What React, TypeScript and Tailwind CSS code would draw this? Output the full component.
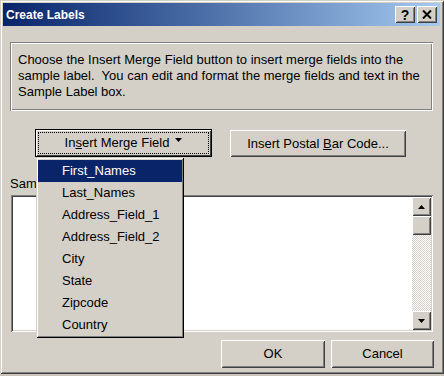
const raised =
  "shadow-[inset_1px_1px_#ffffff,inset_-1px_-1px_#404040,inset_2px_2px_#d4d0c8,inset_-2px_-2px_#808080]";

const menuItems = [
  "First_Names",
  "Last_Names",
  "Address_Field_1",
  "Address_Field_2",
  "City",
  "State",
  "Zipcode",
  "Country",
];

const Arrow: React.FC<{ down?: boolean }> = ({ down }) => (
  <svg width="7" height="4" viewBox="0 0 7 4">
    {down ? <path d="M0 0h7L3.5 4z" fill="#000" /> : <path d="M0 4h7L3.5 0z" fill="#000" />}
  </svg>
);

export default function App() {
  return (
    <div className="w-[444px] h-[376px] bg-[#c8c4bc] font-['Liberation_Sans',Arial,sans-serif] text-[13px] leading-[16px] text-black">
      <div className="h-[374px] flex flex-col bg-[#d4d0c8] pt-[3px] pl-[3px] pr-[4px] pb-[3px] shadow-[inset_1px_1px_#d4d0c8,inset_-1px_-1px_#404040,inset_2px_2px_#ffffff,inset_-2px_-2px_#808080]">
        {/* title bar */}
        <div className="h-[23px] flex items-center justify-between pl-[3px] pr-[3px] bg-gradient-to-r from-[#0a246a] to-[#a6caf0]">
          <span className="text-white font-bold text-[12px]">Create Labels</span>
          <div className="flex gap-[2px]">
            <div className={`w-[20px] h-[17px] bg-[#d4d0c8] flex items-center justify-center ${raised}`}>
              <span className="font-bold text-[14px] leading-none">?</span>
            </div>
            <div className={`w-[20px] h-[17px] bg-[#d4d0c8] flex items-center justify-center ${raised}`}>
              <svg width="10" height="9" viewBox="0 0 10 9">
                <path d="M1 0.5l8 8M9 0.5l-8 8" stroke="#000" strokeWidth="2" />
              </svg>
            </div>
          </div>
        </div>

        {/* body */}
        <div className="flex flex-col">
          <div className="ml-[7px] mt-[16px] w-[423px] h-[69px] pt-[10px] pl-[8px] shadow-[inset_1px_1px_#808080,inset_-1px_-1px_#ffffff,inset_2px_2px_#ffffff,inset_-2px_-2px_#808080]">
            <div className="whitespace-pre">Choose the Insert Merge Field button to insert merge fields into the</div>
            <div className="whitespace-pre">sample label.  You can edit and format the merge fields and text in the</div>
            <div className="whitespace-pre">Sample Label box.</div>
          </div>

          <div className="flex gap-[18px] mt-[18px] pl-[32px]">
            <div className="relative">
              <div className={`w-[177px] h-[28px] bg-[#d4d0c8] border border-black p-[2px] shadow-[inset_1px_1px_#ffffff,inset_-1px_-1px_#404040]`}>
                <div className="h-full border border-dotted border-black flex items-center justify-center gap-[6px]">
                  <span>
                    In<span className="underline">s</span>ert Merge Field
                  </span>
                  <span className="-mt-[7px]">
                    <Arrow down />
                  </span>
                </div>
              </div>
              <div className="absolute z-10 left-[1px] top-[28px] w-[148px] h-[181px] bg-[#d4d0c8] pt-[3px] px-[2px] shadow-[inset_1px_1px_#d4d0c8,inset_-1px_-1px_#000000,inset_2px_2px_#ffffff,inset_-2px_-2px_#808080]">
                {menuItems.map((m, i) => (
                  <div
                    key={m}
                    className={`h-[22px] flex items-center pl-[24px] ${i === 0 ? "bg-[#0a246a] text-white" : ""}`}
                  >
                    {m}
                  </div>
                ))}
              </div>
            </div>
            <div className={`w-[176px] h-[27px] mt-[1px] bg-[#d4d0c8] flex items-center justify-center ${raised}`}>
              <span>
                Insert Postal <span className="underline">B</span>ar Code...
              </span>
            </div>
          </div>

          <div className="ml-[7px] mt-[19px]">Sample Label:</div>

          <div className="ml-[8px] mt-[3px] w-[422px] h-[137px] bg-white p-[2px] flex shadow-[inset_1px_1px_#808080,inset_-1px_-1px_#ffffff,inset_2px_2px_#404040,inset_-2px_-2px_#d4d0c8]">
            <div className="flex-1" />
            <div className="w-[19px] flex flex-col">
              <div className={`h-[19px] bg-[#d4d0c8] flex items-center justify-center ${raised}`}>
                <Arrow />
              </div>
              <div className={`h-[19px] bg-[#d4d0c8] ${raised}`} />
              <div className="flex-1 bg-[repeating-conic-gradient(#d4d0c8_0_25%,#ffffff_0_50%)] bg-[length:2px_2px]" />
              <div className={`h-[19px] bg-[#d4d0c8] flex items-center justify-center ${raised}`}>
                <Arrow down />
              </div>
            </div>
          </div>

          <div className="flex justify-end gap-[6px] mt-[8px] pr-[6px]">
            <div className={`w-[104px] h-[28px] bg-[#d4d0c8] flex items-center justify-center ${raised}`}>OK</div>
            <div className={`w-[103px] h-[28px] bg-[#d4d0c8] flex items-center justify-center ${raised}`}>Cancel</div>
          </div>
        </div>
      </div>
    </div>
  );
}
